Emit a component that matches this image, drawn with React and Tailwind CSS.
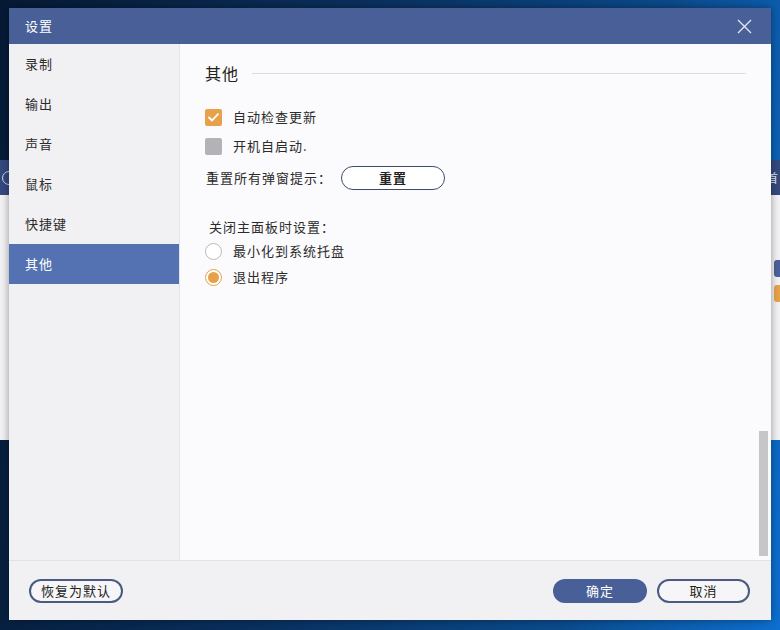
import React from "react";

const font = { fontFamily: '"Noto Sans CJK SC", "Noto Sans", sans-serif' };

function Check() {
  return (
    <span className="w-[17px] h-[17px] rounded-[2px] bg-[#e8a14b] flex items-center justify-center">
      <svg width="11" height="9" viewBox="0 0 11 9" fill="none">
        <path d="M1 4.5 L4 7.5 L10 1.2" stroke="white" strokeWidth="1.8" strokeLinecap="round" strokeLinejoin="round" />
      </svg>
    </span>
  );
}

export default function App() {
  const items = ["录制", "输出", "声音", "鼠标", "快捷键", "其他"];
  return (
    <div className="relative w-[780px] h-[630px] overflow-hidden bg-[linear-gradient(100deg,#061a35_0%,#0a2f5c_40%,#0b4a8a_75%,#0d6fd0_100%)]" style={font}>
      {/* window behind */}
      <div className="absolute left-0 right-0 top-[160px] h-[280px] flex flex-col">
        <div className="h-[35px] bg-[#34497e] flex items-center justify-between px-[2px]">
          <span className="w-[14px] h-[14px] rounded-full border border-[#cfd6e8]"></span>
          <span className="text-[12px] text-[#dfe5f2]">首</span>
        </div>
        <div className="flex-1 bg-[#f2f2f4] flex flex-col items-end pt-[65px] gap-[8px]">
          <span className="w-[6px] h-[17px] rounded-l-[3px] bg-[#4a6199]"></span>
          <span className="w-[6px] h-[17px] rounded-l-[3px] bg-[#e8a14b]"></span>
        </div>
      </div>

      {/* dialog */}
      <div className="absolute left-[9px] top-[8px] w-[762px] h-[612px] flex flex-col shadow-[0_0_8px_rgba(0,0,0,0.4)]">
        <div className="h-[36px] bg-[#485f98] flex items-center justify-between pl-4 pr-[19px]">
          <span className="text-[13px] text-white tracking-[1px]">设置</span>
          <svg width="15" height="15" viewBox="0 0 15 15">
            <path d="M1 1 L14 14 M14 1 L1 14" stroke="#e6eaf4" strokeWidth="1.3" />
          </svg>
        </div>
        <div className="flex-1 flex min-h-0">
          <div className="w-[171px] bg-[#f1f0f2] border-r border-[#e4e3e6] flex flex-col">
            {items.map((t) => (
              <div
                key={t}
                className={
                  t === "其他"
                    ? "h-10 flex items-center pl-4 text-[13px] tracking-[1px] text-white bg-[#5472b1]"
                    : "h-10 flex items-center pl-4 text-[13px] tracking-[1px] text-[#2b2b2b]"
                }
              >
                {t}
              </div>
            ))}
          </div>
          <div className="relative flex-1 bg-[#fbfafc] pl-[25px] pr-[25px] pt-[18px] flex flex-col text-[13px] text-[#2b2b2b] tracking-[1px]">
            <div className="h-[22px] flex items-center gap-[13px]">
              <span className="text-[16px] tracking-[1px] text-[#222]">其他</span>
              <span className="flex-1 h-px bg-[#dedde1]"></span>
            </div>
            <div className="mt-[23px] h-5 flex items-center gap-[11px] pl-[-1px]">
              <Check />
              <span>自动检查更新</span>
            </div>
            <div className="mt-[9px] h-5 flex items-center gap-[11px]">
              <span className="w-[17px] h-[17px] rounded-[2px] bg-[#b3b2b6]"></span>
              <span>开机自启动.</span>
            </div>
            <div className="mt-[10px] h-6 flex items-center">
              <span className="w-[136px] pl-px">重置所有弹窗提示：</span>
              <button className="w-[104px] h-6 rounded-full border-[1.5px] border-[#3e4b6b] bg-white text-[13px] font-bold text-[#222] tracking-[1px]">
                重置
              </button>
            </div>
            <div className="mt-[27px] h-5 flex items-center pl-[4px]">关闭主面板时设置：</div>
            <div className="mt-[4px] h-5 flex items-center gap-[11px]">
              <span className="w-[17px] h-[17px] rounded-full border border-[#b9b8bc] bg-white"></span>
              <span>最小化到系统托盘</span>
            </div>
            <div className="mt-[6px] h-5 flex items-center gap-[11px]">
              <span className="w-[17px] h-[17px] rounded-full border border-[#e8a14b] bg-white flex items-center justify-center">
                <span className="w-[11px] h-[11px] rounded-full bg-[#e8a14b]"></span>
              </span>
              <span>退出程序</span>
            </div>
            <div className="absolute right-[3px] top-[387px] w-[9px] h-[125px] bg-[#c6c5c8]"></div>
          </div>
        </div>
        <div className="h-[60px] bg-[#f1f0f2] border-t border-[#e2e1e4] flex items-center justify-between pl-5 pr-[21px] text-[13px] tracking-[1px]">
          <button className="w-[94px] h-6 rounded-full border-2 border-[#4a5a80] bg-[#f6f6f8] text-[#222]">恢复为默认</button>
          <div className="flex gap-[10px]">
            <button className="w-[94px] h-6 rounded-full bg-[#485f98] text-white">确定</button>
            <button className="w-[93px] h-6 rounded-full border-2 border-[#4a5a80] bg-[#f6f6f8] text-[#222]">取消</button>
          </div>
        </div>
      </div>
    </div>
  );
}
